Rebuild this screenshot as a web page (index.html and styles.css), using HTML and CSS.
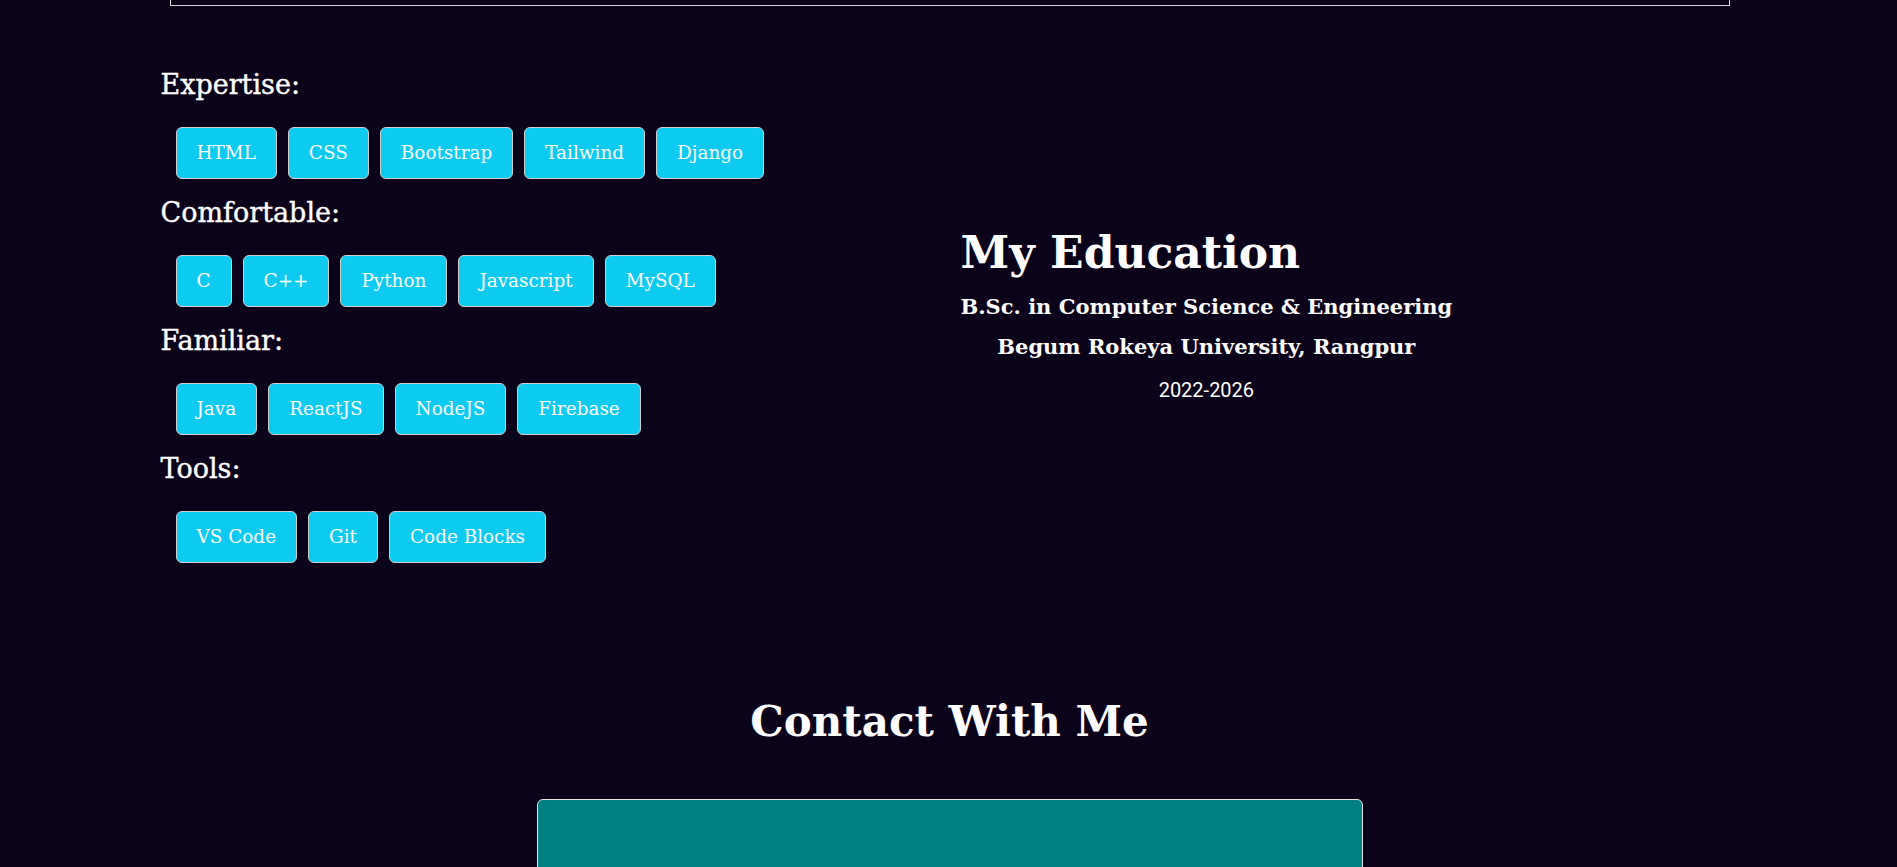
FILE: index.html
```html
<!DOCTYPE html>
<html lang="en">
<head>
<meta charset="utf-8">
<title>Portfolio</title>
<link rel="stylesheet" href="styles.css">
</head>
<body>
<div class="top-box"></div>

<section class="about">
  <div class="col skills">
    <div class="skill-group">
      <h3 class="skill-title">Expertise:</h3>
      <div class="chips">
        <span class="chip">HTML</span>
        <span class="chip">CSS</span>
        <span class="chip">Bootstrap</span>
        <span class="chip">Tailwind</span>
        <span class="chip">Django</span>
      </div>
    </div>
    <div class="skill-group">
      <h3 class="skill-title">Comfortable:</h3>
      <div class="chips">
        <span class="chip">C</span>
        <span class="chip">C++</span>
        <span class="chip">Python</span>
        <span class="chip">Javascript</span>
        <span class="chip">MySQL</span>
      </div>
    </div>
    <div class="skill-group">
      <h3 class="skill-title">Familiar:</h3>
      <div class="chips">
        <span class="chip">Java</span>
        <span class="chip">ReactJS</span>
        <span class="chip">NodeJS</span>
        <span class="chip">Firebase</span>
      </div>
    </div>
    <div class="skill-group">
      <h3 class="skill-title">Tools:</h3>
      <div class="chips">
        <span class="chip">VS Code</span>
        <span class="chip">Git</span>
        <span class="chip">Code Blocks</span>
      </div>
    </div>
  </div>
  <div class="col edu-col">
    <div class="edu">
      <h1 class="edu-title">My Education</h1>
      <p class="edu-line">B.Sc. in Computer Science &amp; Engineering</p>
      <p class="edu-line">Begum Rokeya University, Rangpur</p>
      <p class="edu-year">2022-2026</p>
    </div>
  </div>
</section>

<section class="contact">
  <h1 class="contact-title">Contact With Me</h1>
  <div class="contact-card"></div>
</section>
</body>
</html>
```

FILE: styles.css
```css
* { box-sizing: border-box; }

html, body {
  margin: 0;
  padding: 0;
  background: #0b0319;
  color: #ffffff;
  font-family: "DejaVu Serif", "Liberation Serif", serif;
  overflow: hidden;
}

.top-box {
  width: 1560px;
  height: 6px;
  margin-left: 170px;
  border: 1px solid #d4d4d4;
  border-top: none;
}

.about {
  width: 1600px;
  margin: 0 auto;
  padding-top: 62px;
  display: flex;
  align-items: center;
}

.col {
  flex: 1 1 0;
  padding: 0 12px;
}

.skill-title {
  margin: 0;
  font-size: 27px;
  line-height: 34px;
  font-weight: 400;
  -webkit-text-stroke: 0.4px #ffffff;
}

.chips {
  display: flex;
  gap: 11px;
  margin: 25px 0 17px 15px;
}

.chip {
  background: #0dcaf0;
  color: #ffffff;
  border: 1px solid #cfcfcf;
  border-radius: 6px;
  padding: 10px 20px;
  font-size: 18.4px;
  line-height: 30px;
}

.edu-col {
  display: flex;
  padding-bottom: 14px;
}

.edu {
  text-align: center;
}

.edu-title {
  text-align: left;
  margin: 0 0 6px;
  font-size: 44px;
  line-height: 56px;
  font-weight: 700;
}

.edu-line {
  margin: 0;
  font-size: 21px;
  line-height: 40px;
  font-weight: 700;
}

.edu-year {
  margin: 0;
  padding-top: 3px;
  font-family: Roboto, "Liberation Sans", sans-serif;
  font-size: 20px;
  line-height: 40px;
}

.contact {
  padding-top: 114px;
  display: flex;
  flex-direction: column;
  align-items: center;
}

.contact-title {
  margin: 0 0 0 2px;
  font-size: 42px;
  line-height: 56px;
  font-weight: 700;
}

.contact-card {
  margin: 49px 0 0 2px;
  width: 826px;
  height: 300px;
  background: #008080;
  border: 1px solid #e6e6e6;
  border-radius: 6px;
}
```
